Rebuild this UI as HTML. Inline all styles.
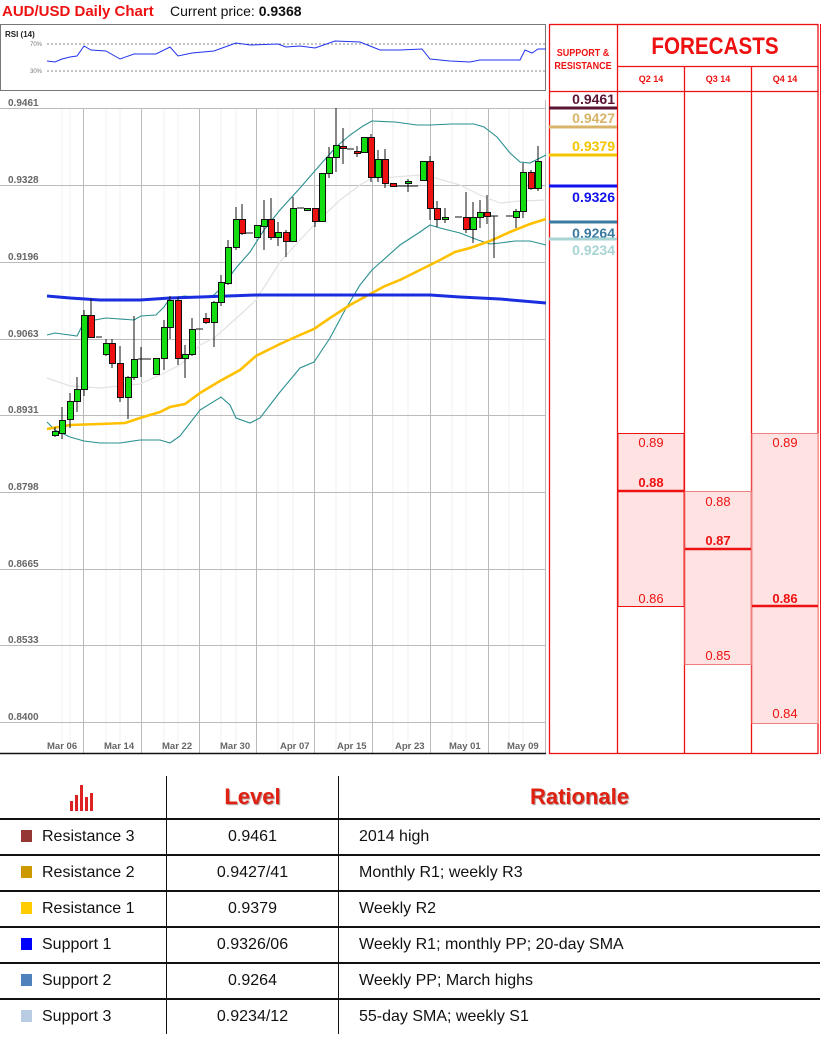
<!DOCTYPE html>
<html><head><meta charset="utf-8"><style>
body{margin:0;width:823px;height:1037px;background:#fff;overflow:hidden;font-family:"Liberation Sans",sans-serif;position:relative}
svg{position:absolute;left:0;top:0}
table{position:absolute;left:0;top:776px;width:820px;border-collapse:collapse;font-size:16px;color:#111}
td{border-bottom:2px solid #111;height:34px;padding:0}
td.c1{width:166px;border-right:1.5px solid #111}
td.c2{width:171px;text-align:center;border-right:1.5px solid #111}
td.c3{padding-left:20px}
tr.h td{border-bottom:2px solid #111;height:42px}
tr.last td{border-bottom:none}
.sq{display:inline-block;width:11px;height:12px;margin:0 10px 0 21px;vertical-align:-1px}
.hd{color:#e02010;font-weight:bold;font-size:22px;text-shadow:1px 1px 1px #a88}
</style></head><body>
<svg width="823" height="760" viewBox="0 0 823 760" font-family="Liberation Sans, sans-serif">
<text x="2" y="16" font-size="15" font-weight="bold" fill="#ee1111">AUD/USD Daily Chart</text>
<text x="170" y="16" font-size="14" fill="#111">Current price: <tspan font-weight="bold">0.9368</tspan></text>
<rect x="0.5" y="24.5" width="545" height="66" fill="#fff" stroke="#777"/>
<text x="5" y="37" font-size="8" font-weight="bold" fill="#222">RSI (14)</text>
<line x1="47" y1="44" x2="545" y2="44" stroke="#666" stroke-dasharray="2,2" stroke-width="0.8"/>
<line x1="47" y1="71" x2="545" y2="71" stroke="#666" stroke-dasharray="2,2" stroke-width="0.8"/>
<text x="30" y="46" font-size="6" fill="#777">70%</text>
<text x="30" y="73" font-size="6" fill="#777">30%</text>
<polyline fill="none" stroke="#2233ee" stroke-width="1" points="47,61 55,62 62,59 70,57 77,56 84,46 91,50 106,51 120,59 134,54 156,54 170,47 178,56 192,53 214,51 236,43 250,45 278,44 286,47 300,46 315,48 335,41 360,42 370,46 380,50 400,50 422,49 430,59 450,61 470,62 480,60 520,60 525,50 532,53 538,49 546,49"/>
<g stroke="#f0f0f0" stroke-width="1">
<line x1="62" y1="108" x2="62" y2="752"/><line x1="70" y1="108" x2="70" y2="752"/><line x1="106" y1="108" x2="106" y2="752"/><line x1="120" y1="108" x2="120" y2="752"/><line x1="164" y1="108" x2="164" y2="752"/><line x1="178" y1="108" x2="178" y2="752"/><line x1="221" y1="108" x2="221" y2="752"/><line x1="236" y1="108" x2="236" y2="752"/><line x1="278" y1="108" x2="278" y2="752"/><line x1="293" y1="108" x2="293" y2="752"/><line x1="336" y1="108" x2="336" y2="752"/><line x1="350" y1="108" x2="350" y2="752"/><line x1="393" y1="108" x2="393" y2="752"/><line x1="408" y1="108" x2="408" y2="752"/><line x1="452" y1="108" x2="452" y2="752"/><line x1="466" y1="108" x2="466" y2="752"/><line x1="509" y1="108" x2="509" y2="752"/><line x1="523" y1="108" x2="523" y2="752"/>
</g>
<g stroke="#bbb" stroke-width="1">
<line x1="0" y1="108.5" x2="546" y2="108.5"/><line x1="0" y1="185.5" x2="546" y2="185.5"/><line x1="0" y1="262.5" x2="546" y2="262.5"/><line x1="0" y1="339.5" x2="546" y2="339.5"/><line x1="0" y1="415.5" x2="546" y2="415.5"/><line x1="0" y1="492.5" x2="546" y2="492.5"/><line x1="0" y1="569.5" x2="546" y2="569.5"/><line x1="0" y1="645.5" x2="546" y2="645.5"/><line x1="0" y1="722.5" x2="546" y2="722.5"/>
<line x1="83.5" y1="108" x2="83.5" y2="753"/><line x1="141.5" y1="108" x2="141.5" y2="753"/><line x1="199.5" y1="108" x2="199.5" y2="753"/><line x1="256.5" y1="108" x2="256.5" y2="753"/><line x1="314.5" y1="108" x2="314.5" y2="753"/><line x1="372.5" y1="108" x2="372.5" y2="753"/><line x1="430.5" y1="108" x2="430.5" y2="753"/><line x1="488.5" y1="108" x2="488.5" y2="753"/><line x1="545.5" y1="100" x2="545.5" y2="753"/>
</g>
<line x1="0" y1="753.5" x2="546" y2="753.5" stroke="#111" stroke-width="1.5"/>
<g font-size="10" fill="#666" font-weight="bold">
<text x="8" y="106">0.9461</text><text x="8" y="183">0.9328</text><text x="8" y="260">0.9196</text><text x="8" y="337">0.9063</text><text x="8" y="413">0.8931</text><text x="8" y="490">0.8798</text><text x="8" y="567">0.8665</text><text x="8" y="643">0.8533</text><text x="8" y="720">0.8400</text>
</g>
<g font-size="9.5" fill="#666" font-weight="bold">
<text x="47" y="749">Mar 06</text><text x="104" y="749">Mar 14</text><text x="162" y="749">Mar 22</text><text x="220" y="749">Mar 30</text><text x="280" y="749">Apr 07</text><text x="337" y="749">Apr 15</text><text x="395" y="749">Apr 23</text><text x="449" y="749">May 01</text><text x="507" y="749">May 09</text>
</g>
<polyline fill="none" stroke="#e2e2e2" stroke-width="1.2" points="47,378 70,386 100,388 140,384 160,375 180,365 200,345 214,338 240,315 256,300 280,262 300,240 314,225 340,200 360,185 372,178 395,177 420,175 432,177 460,185 480,195 500,203 520,201 546,200"/>
<polyline fill="none" stroke="#2a9090" stroke-width="1.1" points="47,335 55,333 77,336 84,322 106,318 134,320 141,316 156,315 164,307 170,298 185,296 199,298 214,295 221,288 236,268 250,252 264,230 280,210 300,188 320,165 336,147 350,135 363,126 372,121 395,122 417,125 430,125 452,124 474,124 484,127 497,137 510,153 520,162 530,163 546,155"/>
<polyline fill="none" stroke="#2a9090" stroke-width="1.1" points="47,422 55,430 70,437 84,441 100,443 120,443 140,440 160,440 170,443 180,436 200,410 221,397 230,405 236,418 250,423 260,418 280,392 300,368 314,362 330,338 345,310 360,285 372,270 400,245 420,232 430,225 440,228 460,233 478,240 490,244 500,243 515,241 530,241 546,245"/>
<polyline fill="none" stroke="#ffc000" stroke-width="2.6" points="47,429 70,425 100,424 125,423 140,418 160,412 170,407 185,404 200,393 220,381 240,370 256,356 280,344 300,335 314,329 330,318 350,305 372,293 385,286 400,280 420,270 440,260 455,252 470,248 490,241 510,232 530,224 546,219"/>
<polyline fill="none" stroke="#1a2ee0" stroke-width="3" points="47,296 70,298 100,300 140,300 170,298 200,297 256,295 320,295 360,295 430,295 460,297 500,299 546,303"/>
<g stroke="#111" stroke-width="1">
<path d="M55 427V437M62 407V439M70 393V428M77 377V412M84 310V396M91 299V338M106 339V356M112 339V368M120 346V402M128 376V419M134 316V380M141 347V377M164 320V370M170 296V339M178 297V365M185 345V378M192 318V356M206 313V324M214 301V347M221 275V306M228 240V285M236 207V250M242 204V235M264 200V250M271 198V240M278 222V246M286 230V257M293 197V242M315 208V227M329 147V178M336 108V172M343 128V164M357 146V157M371 134V182M378 150V182M385 149V188M408 179V192M430 156V220M437 201V227M445 208V223M466 192V233M473 202V243M480 200V228M487 195V224M494 216V258M516 209V228M523 163V218M531 170V190M538 146V191"/>
<path d="M96 337H102M138 359H145M144 359H151M196 329H203M246 233H253M297 208H304M347 149H354M397 186H404M455 217H462M491 216H498M506 216H513M400 186H418" />
</g>
<g stroke="#111" stroke-width="1" fill="#11dd11">
<rect x="52.5" y="431.5" width="6" height="4"/><rect x="59.5" y="420.5" width="6" height="13"/><rect x="67.5" y="401.5" width="6" height="18"/><rect x="74.5" y="389.5" width="6" height="12"/><rect x="81.5" y="315.5" width="6" height="74"/><rect x="103.5" y="343.5" width="6" height="11"/><rect x="125.5" y="377.5" width="6" height="20"/><rect x="131.5" y="359.5" width="6" height="18"/><rect x="153.5" y="358.5" width="6" height="16"/><rect x="161.5" y="327.5" width="6" height="31"/><rect x="167.5" y="300.5" width="6" height="27"/><rect x="182.5" y="354.5" width="6" height="4"/><rect x="189.5" y="329.5" width="6" height="25"/><rect x="211.5" y="302.5" width="6" height="20"/><rect x="218.5" y="282.5" width="6" height="20"/><rect x="225.5" y="247.5" width="6" height="36"/><rect x="233.5" y="219.5" width="6" height="28"/><rect x="254.5" y="225.5" width="6" height="12"/><rect x="261.5" y="219.5" width="6" height="7"/><rect x="275.5" y="232.5" width="6" height="5"/><rect x="290.5" y="208.5" width="6" height="33"/><rect x="304.5" y="208.5" width="6" height="2"/><rect x="319.5" y="173.5" width="6" height="48"/><rect x="326.5" y="157.5" width="6" height="16"/><rect x="333.5" y="145.5" width="6" height="12"/><rect x="361.5" y="137.5" width="6" height="15"/><rect x="375.5" y="159.5" width="6" height="18"/><rect x="405.5" y="181.5" width="6" height="2"/><rect x="420.5" y="161.5" width="6" height="19"/><rect x="442.5" y="217.5" width="6" height="2"/><rect x="470.5" y="217.5" width="6" height="12"/><rect x="477.5" y="212.5" width="6" height="5"/><rect x="513.5" y="211.5" width="6" height="6"/><rect x="520.5" y="172.5" width="6" height="39"/><rect x="535.5" y="161.5" width="6" height="27"/>
</g>
<g stroke="#111" stroke-width="1" fill="#ee1111">
<rect x="88.5" y="315.5" width="6" height="22"/><rect x="109.5" y="343.5" width="6" height="20"/><rect x="117.5" y="363.5" width="6" height="34"/><rect x="175.5" y="300.5" width="6" height="58"/><rect x="203.5" y="318.5" width="6" height="4"/><rect x="239.5" y="219.5" width="6" height="14"/><rect x="268.5" y="219.5" width="6" height="18"/><rect x="283.5" y="232.5" width="6" height="9"/><rect x="312.5" y="208.5" width="6" height="13"/><rect x="340.5" y="146.5" width="6" height="2"/><rect x="354.5" y="151.5" width="6" height="2"/><rect x="368.5" y="137.5" width="6" height="40"/><rect x="382.5" y="159.5" width="6" height="24"/><rect x="390.5" y="183.5" width="6" height="3"/><rect x="427.5" y="161.5" width="6" height="47"/><rect x="434.5" y="208.5" width="6" height="11"/><rect x="463.5" y="217.5" width="6" height="12"/><rect x="484.5" y="212.5" width="6" height="4"/><rect x="528.5" y="172.5" width="6" height="16"/>
</g>
<g stroke="#ee1111" stroke-width="1.3" fill="none">
<rect x="549.5" y="24.5" width="268.5" height="729"/>
<line x1="820.5" y1="24" x2="820.5" y2="754" stroke-width="1"/>
<line x1="617.5" y1="24" x2="617.5" y2="754"/>
<line x1="617" y1="66.5" x2="818" y2="66.5"/>
<line x1="549" y1="91.5" x2="818" y2="91.5"/>
<line x1="684.5" y1="66" x2="684.5" y2="754"/>
<line x1="751.5" y1="66" x2="751.5" y2="754"/>
</g>
<text x="583" y="56" font-size="10" font-weight="bold" fill="#ee1111" text-anchor="middle" transform="translate(583 0) scale(0.9 1) translate(-583 0)">SUPPORT &amp;</text>
<text x="583" y="69" font-size="10" font-weight="bold" fill="#ee1111" text-anchor="middle" transform="translate(583 0) scale(0.9 1) translate(-583 0)">RESISTANCE</text>
<text x="715" y="54" font-size="24" font-weight="bold" fill="#ee1111" text-anchor="middle" transform="translate(715 0) scale(0.86 1) translate(-715 0)">FORECASTS</text>
<g font-size="9" font-weight="bold" fill="#ee1111" text-anchor="middle">
<text x="651" y="82">Q2 14</text><text x="718" y="82">Q3 14</text><text x="785" y="82">Q4 14</text>
</g>
<g font-size="14" font-weight="bold" text-anchor="end">
<text x="615" y="104" fill="#5a1535">0.9461</text>
<text x="615" y="123" fill="#d8b46a">0.9427</text>
<text x="615" y="151" fill="#f5c400">0.9379</text>
<text x="615" y="202" fill="#1010ee">0.9326</text>
<text x="615" y="238" fill="#3a7aa0">0.9264</text>
<text x="615" y="255" fill="#a8d4d4">0.9234</text>
</g>
<g stroke-width="3">
<line x1="549" y1="108" x2="617" y2="108" stroke="#5a1535"/>
<line x1="549" y1="127" x2="617" y2="127" stroke="#d8b46a"/>
<line x1="549" y1="155" x2="617" y2="155" stroke="#f5c400"/>
<line x1="549" y1="186" x2="617" y2="186" stroke="#1010ee"/>
<line x1="549" y1="222" x2="617" y2="222" stroke="#3a7aa0"/>
<line x1="549" y1="239" x2="617" y2="239" stroke="#a8d4d4"/>
</g>
<g fill="#ffe3e3" stroke="#ee1111" stroke-width="1">
<rect x="618" y="433.5" width="66" height="173"/>
<rect x="685" y="491.5" width="66" height="173" stroke="#f08080"/>
<rect x="752" y="433.5" width="66" height="290" stroke="#f08080"/>
</g>
<g stroke="#ee1111" stroke-width="2.5">
<line x1="618" y1="491" x2="684" y2="491"/><line x1="685" y1="549" x2="751" y2="549"/><line x1="752" y1="606" x2="818" y2="606"/>
</g>
<g font-size="13" fill="#ee1111" text-anchor="middle">
<text x="651" y="447">0.89</text><text x="651" y="487" font-weight="bold">0.88</text><text x="651" y="603">0.86</text>
<text x="718" y="506">0.88</text><text x="718" y="545" font-weight="bold">0.87</text><text x="718" y="660">0.85</text>
<text x="785" y="447">0.89</text><text x="785" y="603" font-weight="bold">0.86</text><text x="785" y="718">0.84</text>
</g>
</svg>
<table>
<tr class="h"><td class="c1" style="text-align:center"><svg width="32" height="32" viewBox="0 0 32 32" style="position:static;vertical-align:middle"><g fill="#dd2222"><rect x="3" y="20" width="3" height="10"/><rect x="8" y="14" width="3" height="16"/><rect x="13" y="4" width="3" height="26"/><rect x="18" y="16" width="3" height="14"/><rect x="23" y="12" width="3" height="18"/></g></svg></td><td class="c2"><span class="hd">Level</span></td><td class="c3" style="text-align:center;padding-left:0"><span class="hd">Rationale</span></td></tr>
<tr><td class="c1"><span class="sq" style="background:#953735"></span>Resistance 3</td><td class="c2">0.9461</td><td class="c3">2014 high</td></tr>
<tr><td class="c1"><span class="sq" style="background:#cc9900"></span>Resistance 2</td><td class="c2">0.9427/41</td><td class="c3">Monthly R1; weekly R3</td></tr>
<tr><td class="c1"><span class="sq" style="background:#ffcc00"></span>Resistance 1</td><td class="c2">0.9379</td><td class="c3">Weekly R2</td></tr>
<tr><td class="c1"><span class="sq" style="background:#0000ff"></span>Support 1</td><td class="c2">0.9326/06</td><td class="c3">Weekly R1; monthly PP; 20-day SMA</td></tr>
<tr><td class="c1"><span class="sq" style="background:#4f81bd"></span>Support 2</td><td class="c2">0.9264</td><td class="c3">Weekly PP; March highs</td></tr>
<tr class="last"><td class="c1"><span class="sq" style="background:#b8cce4"></span>Support 3</td><td class="c2">0.9234/12</td><td class="c3">55-day SMA; weekly S1</td></tr>
</table>
</body></html>
